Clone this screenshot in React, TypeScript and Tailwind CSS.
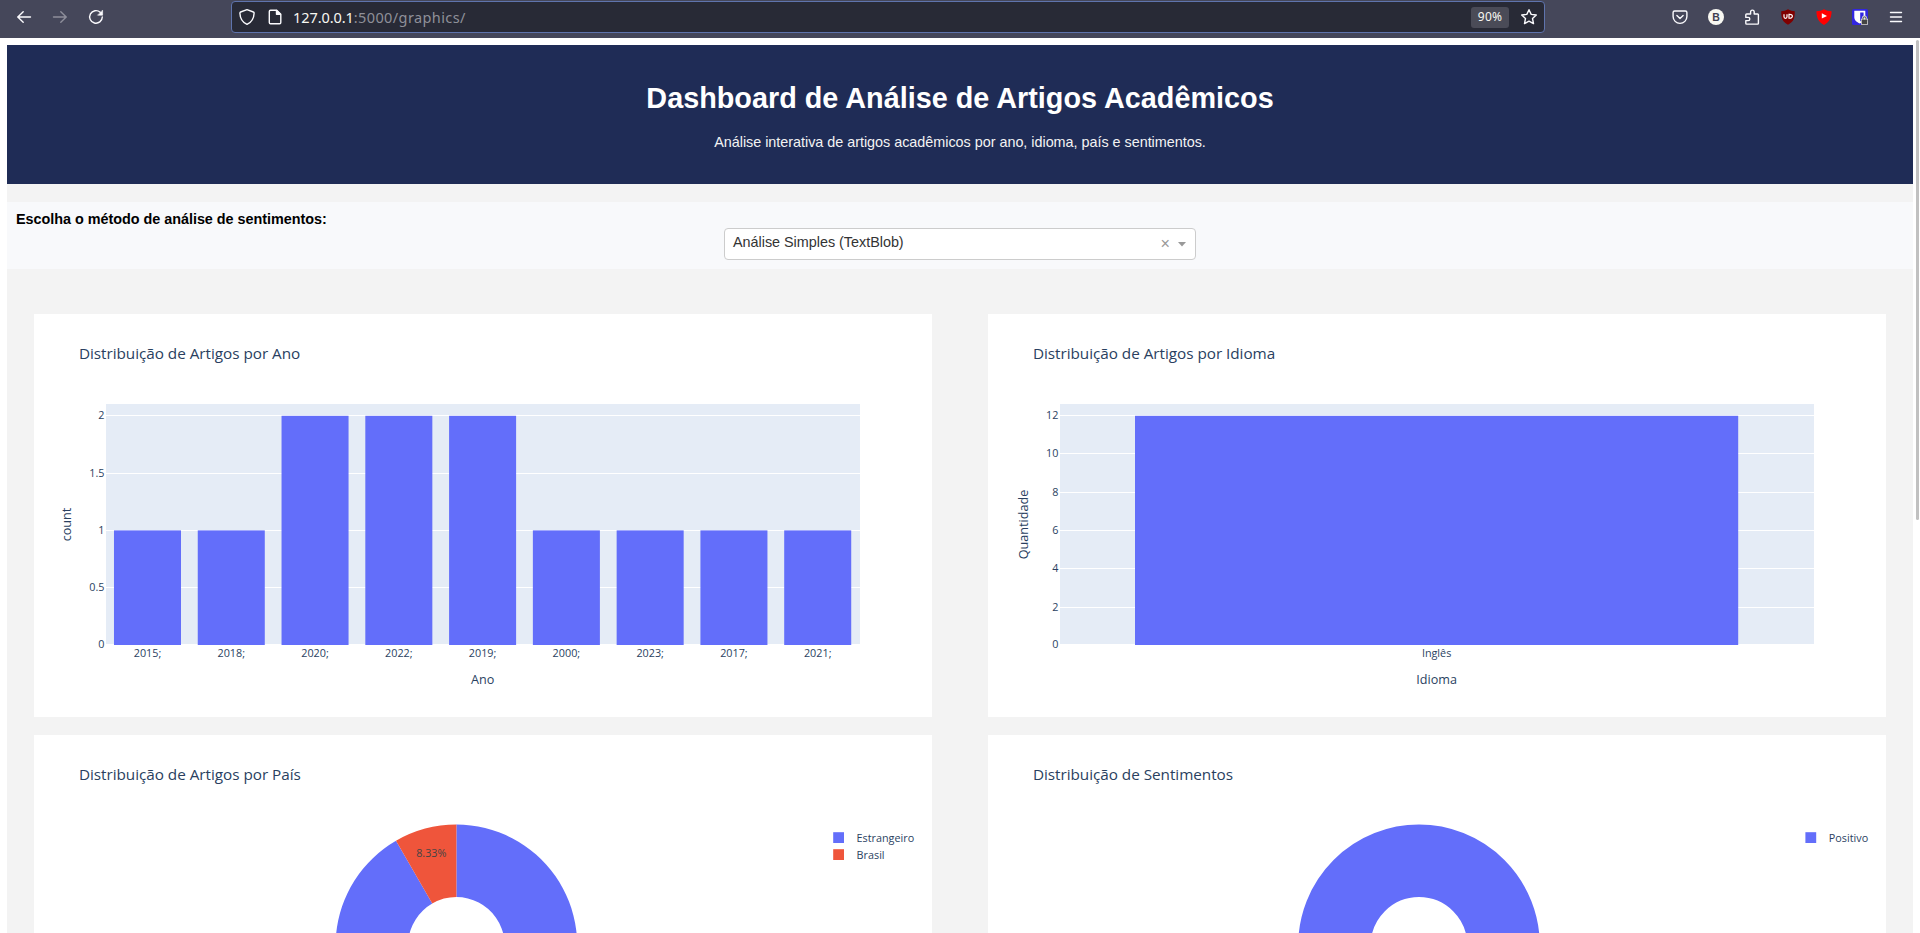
import React from "react";

const INK = "#2a3f5f";
const PRIMARY = "#636efa";
const DANGER = "#ef553b";
const PLOT_BG = "#e5ecf6";

function IconSlot({ children }: { children: React.ReactNode }) {
  return <div className="flex h-[34px] w-9 shrink-0 items-center justify-center">{children}</div>;
}

function Glyph({ children, className = "text-[#fbfbfe]" }: { children: React.ReactNode; className?: string }) {
  return (
    <svg
      width="18"
      height="18"
      viewBox="0 0 18 18"
      fill="none"
      stroke="currentColor"
      strokeWidth="1.4"
      strokeLinecap="round"
      strokeLinejoin="round"
      className={`block shrink-0 ${className}`}
    >
      {children}
    </svg>
  );
}

function BrowserBar() {
  return (
    <div className="flex h-[38px] w-full items-start bg-[#45475a]">
      <div className="flex w-[231px] pl-1.5">
        <IconSlot>
          <Glyph>
            <path d="M15.5 9H2.7M8.2 3.8 2.8 9l5.400 5.200" />
          </Glyph>
        </IconSlot>
        <IconSlot>
          <Glyph className="text-[#8e8f9b]">
            <path d="M2.500 9h12.800M9.800 3.800 15.200 9l-5.400 5.200" />
          </Glyph>
        </IconSlot>
        <IconSlot>
          <Glyph>
            <path d="M13.2 4.200A6.300 6.300 0 1 0 15.300 9" />
            <path d="M15.600 2.500v4.700h-4.700z" fill="currentColor" strokeWidth="0.600" />
          </Glyph>
        </IconSlot>
      </div>

      <div className="mt-px flex h-8 w-[1314px] items-center rounded-[4px] border border-[#5f74ad] bg-[#282a36] pr-[6px] pl-[6px]">
        <Glyph>
          <path d="M9 1.700 15.400 4c.6.2.8.6.7 1.200C15.900 10.300 13.500 14.300 9 16.400 4.500 14.300 2.100 10.300 1.900 5.200c0-.6.2-1 .7-1.200z" />
        </Glyph>
        <div className="ml-[10px] flex">
          <Glyph>
            <path d="M4.500 2.200h6.200l4.100 4.100v8.300c0 .7-.5 1.200-1.200 1.200H4.500c-.7 0-1.200-.5-1.200-1.200V3.400c0-.7.5-1.200 1.200-1.200z" />
            <path d="M10.500 2.500v3.800h3.900z" fill="currentColor" />
          </Glyph>
        </div>
        <div className="ml-[9px] flex-1 whitespace-nowrap font-['Noto_Sans',sans-serif] text-[14.5px] leading-[20px] tracking-[0.4px] text-[#8f9099]">
          <span className="tracking-[-0.08px] text-[#f8f8f2]">127.0.0.1</span>:5000/graphics/
        </div>
        <div className="flex h-[21px] w-[38px] items-center justify-center rounded-[3px] bg-[#4a4b57] font-['Noto_Sans',sans-serif] text-[12px] tracking-[0.2px] text-[#f8f8f2]">
          90%
        </div>
        <div className="ml-[11px]">
          <Glyph>
            <path d="m9 1.700 2.200 4.700 5.100.6-3.800 3.500 1 5.100L9 13.100l-4.500 2.500 1-5.100L1.700 7l5.100-.6z" />
          </Glyph>
        </div>
      </div>

      <div className="ml-auto flex pr-1.5">
        <IconSlot>
          <Glyph>
            <path d="M3.600 3h10.800c.9 0 1.500.6 1.500 1.500v4a6.900 6.900 0 0 1-13.800 0v-4C2.100 3.600 2.700 3 3.600 3z" />
            <path d="m5.900 7.500 3.100 3 3.100-3" />
          </Glyph>
        </IconSlot>
        <IconSlot>
          <div className="flex h-4 w-4 items-center justify-center rounded-full bg-[#f8f8f2] font-['Liberation_Sans',sans-serif] text-[10.5px] leading-none font-bold text-[#3f4151]">
            B
          </div>
        </IconSlot>
        <IconSlot>
          <Glyph>
            <path d="M3.600 6h4V3.900a1.800 1.800 0 0 1 3.600 0V6h3.400c.5 0 .8.3.8.800v8.500c0 .5-.3.800-.8.800H3.600c-.5 0-.8-.3-.8-.8v-2.700h2.400a1.500 1.500 0 0 0 0-3.200H2.800V6.800c0-.5.300-.8.800-.8z" />
          </Glyph>
        </IconSlot>
        <IconSlot>
          <svg width="16" height="16" viewBox="0 0 16 16" className="block">
            <path d="M8 .3c2 1.300 4.300 1.900 6.800 2 0 7-1 10.300-6.800 13.500C2.200 12.600 1.200 9.300 1.200 2.300 3.700 2.200 6 1.600 8 .3z" fill="#800000" />
            <path d="M4 5.300v2.500c0 1 .5 1.500 1.500 1.500S7 8.800 7 7.800V5.300M9 5.400v3.800c4.500.6 4.500-4.400 0-3.800z" fill="none" stroke="#fff" strokeWidth="1.200" />
          </svg>
        </IconSlot>
        <IconSlot>
          <svg width="16" height="16" viewBox="0 0 16 16" className="block">
            <path d="M8 .3c2 1.300 4.600 1.900 7.600 2C15.400 9 13.600 13 8 15.900 2.400 13 .6 9 .4 2.300 3.400 2.200 6 1.600 8 .3z" fill="#f00" />
            <path d="M5.800 4.200v5.400L11 6.900z" fill="#fff" />
          </svg>
        </IconSlot>
        <IconSlot>
          <svg width="16" height="16" viewBox="0 0 16 16" className="block">
            <rect width="16" height="16" rx="1.500" fill="#3126e0" />
            <path d="M2.300 1.800h11v6.500c0 3.100-2.500 4.800-5.500 6.200-3-1.400-5.500-3.100-5.500-6.200z" fill="#fff" />
            <path d="M8.200 3.500h3.400v4.700c0 2-1.600 3.100-3.400 4.200z" fill="#3126e0" />
            <rect x="9" y="9.400" width="7" height="6.600" rx="1" fill="#d8d8d8" />
            <path d="M11 10.800V9.200a1.500 1.500 0 0 1 3 0v1.600" fill="none" stroke="#d8d8d8" strokeWidth="2.200" />
            <path d="M11 10.800V9.400a1.500 1.500 0 0 1 3 0v1.400" fill="none" stroke="#444" strokeWidth="0.900" />
            <rect x="9.800" y="10.800" width="5.400" height="4.400" rx="0.500" fill="#444" />
          </svg>
        </IconSlot>
        <IconSlot>
          <Glyph>
            <path d="M3.500 4.500h11M3.500 9h11M3.500 13.500h11" />
          </Glyph>
        </IconSlot>
      </div>
    </div>
  );
}

function Card({ title, children }: { title: string; children: React.ReactNode }) {
  return (
    <div className="h-[403px] w-[898px] bg-white">
      <svg width="898" height="403" viewBox="0 0 898 403" fontFamily="'Open Sans', sans-serif" fill={INK} className="block">
        <text x="44.9" y="45" fontSize="15.3" letterSpacing="-0.035">{title}</text>
        {children}
      </svg>
    </div>
  );
}

interface BarChartProps {
  title: string;
  xLabel: string;
  yLabel: string;
  yLabelX: number;
  bars: { label: string; value: number }[];
  max: number;
  ticks: { label: string; y: number }[];
}

const PLOT_X = 72;
const PLOT_W = 754;
const BARS_X = 71.6;
const BASE_Y = 331;
const FULL_H = 229.2;

function BarChart({ title, xLabel, yLabel, yLabelX, bars, max, ticks }: BarChartProps) {
  const step = PLOT_W / bars.length;
  return (
    <Card title={title}>
      <rect x={PLOT_X} y={90} width={PLOT_W} height={240} fill={PLOT_BG} />
      {ticks.map((t) => (
        <g key={t.label}>
          <rect x={PLOT_X} y={t.y} width={PLOT_W} height={1} fill="#fff" />
          <text x={70.4} y={t.y + 4} fontSize="10.8" textAnchor="end">{t.label}</text>
        </g>
      ))}
      {bars.map((b, i) => {
        const h = (b.value / max) * FULL_H;
        return (
          <g key={b.label}>
            <rect x={BARS_X + step * (i + 0.1)} y={BASE_Y - h} width={step * 0.8} height={h} fill={PRIMARY} />
            <text x={BARS_X + step * (i + 0.5)} y={343} fontSize="10.8" textAnchor="middle">{b.label}</text>
          </g>
        );
      })}
      <text x={BARS_X + PLOT_W / 2} y={370} fontSize="12.6" textAnchor="middle">{xLabel}</text>
      <text transform={`translate(${yLabelX} 210.500) rotate(-90)`} fontSize="12.6" textAnchor="middle">{yLabel}</text>
    </Card>
  );
}

function Legend({ x, items }: { x: number; items: { label: string; color: string }[] }) {
  return (
    <g>
      {items.map((item, i) => (
        <g key={item.label}>
          <rect x={x} y={97.200 + i * 17} width={10.800} height={10.800} fill={item.color} />
          <text x={x + 23.400} y={107 + i * 17} fontSize="10.8">{item.label}</text>
        </g>
      ))}
    </g>
  );
}

const R = 120.8;
const HOLE = 48.3;
const CY = 210.4;

function Donut({ cx, color }: { cx: number; color: string }) {
  return <circle cx={cx} cy={CY} r={(R + HOLE) / 2} fill="none" stroke={color} strokeWidth={R - HOLE} />;
}

function slicePath(cx: number, from: number, to: number) {
  const pt = (r: number, a: number) => `${cx + r * Math.sin(a)} ${CY - r * Math.cos(a)}`;
  const large = to - from > Math.PI ? 1 : 0;
  return `M${pt(R, from)}A${R} ${R} 0 ${large} 1 ${pt(R, to)}L${pt(HOLE, to)}A${HOLE} ${HOLE} 0 ${large} 0 ${pt(HOLE, from)}Z`;
}

const years = [
  { label: "2015;", value: 1 },
  { label: "2018;", value: 1 },
  { label: "2020;", value: 2 },
  { label: "2022;", value: 2 },
  { label: "2019;", value: 2 },
  { label: "2000;", value: 1 },
  { label: "2023;", value: 1 },
  { label: "2017;", value: 1 },
  { label: "2021;", value: 1 },
];

export default function App() {
  const split = (Math.PI * 2 * 11) / 12;
  return (
    <div className="flex h-[933px] w-[1920px] flex-col overflow-hidden bg-white font-['Liberation_Sans',Arial,sans-serif]">
      <BrowserBar />
      <div className="flex min-h-0 flex-1 justify-between pl-[7px]">
        <main className="mt-[7px] flex w-[1906px] flex-col overflow-hidden bg-[#f3f3f3]">
          <header className="h-[139px] shrink-0 bg-[#1f2c56] pt-9 text-center text-white">
            <h1 className="text-[28.8px] leading-[34px] font-bold">Dashboard de Análise de Artigos Acadêmicos</h1>
            <p className="mt-[19px] text-[14.4px] leading-4 tracking-[-0.025px] text-[#f3f3f3]">
              Análise interativa de artigos acadêmicos por ano, idioma, país e sentimentos.
            </p>
          </header>

          <section className="mt-[18px] h-[67px] shrink-0 bg-[#f8f9fb] px-[9px] pt-[9px]">
            <label className="block text-[14.4px] leading-[17px] font-bold tracking-[-0.025px] text-black">
              Escolha o método de análise de sentimentos:
            </label>
            <div className="mx-auto flex h-8 w-[472px] items-center rounded-[4px] border border-[#cccccc] bg-white pr-[9px] pl-2">
              <span className="flex-1 pb-[5px] text-[14.4px] leading-5 tracking-[-0.02px] text-[#333]">Análise Simples (TextBlob)</span>
              <span className="mr-[8px] pb-[2px] text-[16.2px] leading-none text-[#999]">×</span>
              <svg width="8" height="5" viewBox="0 0 8 5" className="block">
                <path d="M0 0h8L4 4.500z" fill="#999" />
              </svg>
            </div>
          </section>

          <section className="mt-[45px] grid grid-cols-[898px_898px] gap-x-14 gap-y-[18px] pl-[27px]">
            <BarChart
              title="Distribuição de Artigos por Ano"
              xLabel="Ano"
              yLabel="count"
              yLabelX={37}
              bars={years}
              max={2}
              ticks={[
                { label: "2", y: 101 },
                { label: "1.5", y: 159 },
                { label: "1", y: 216 },
                { label: "0.5", y: 273 },
                { label: "0", y: 330 },
              ]}
            />
            <BarChart
              title="Distribuição de Artigos por Idioma"
              xLabel="Idioma"
              yLabel="Quantidade"
              yLabelX={40}
              bars={[{ label: "Inglês", value: 12 }]}
              max={12}
              ticks={[
                { label: "12", y: 101 },
                { label: "10", y: 139 },
                { label: "8", y: 178 },
                { label: "6", y: 216 },
                { label: "4", y: 254 },
                { label: "2", y: 293 },
                { label: "0", y: 330 },
              ]}
            />
            <Card title="Distribuição de Artigos por País">
              <path d={slicePath(422.4, 0, split)} fill={PRIMARY} />
              <path d={slicePath(422.4, split, Math.PI * 2)} fill={DANGER} />
              <text x={397.3} y={122} fontSize="10.8" textAnchor="middle" fill="#444">8.33%</text>
              <Legend
                x={799.2}
                items={[
                  { label: "Estrangeiro", color: PRIMARY },
                  { label: "Brasil", color: DANGER },
                ]}
              />
            </Card>
            <Card title="Distribuição de Sentimentos">
              <Donut cx={431} color={PRIMARY} />
              <Legend x={817.4} items={[{ label: "Positivo", color: PRIMARY }]} />
            </Card>
          </section>
        </main>
        <div className="mt-[2px] mr-px h-[480px] w-[3px] rounded-full bg-[#c1c1c1]" />
      </div>
    </div>
  );
}
